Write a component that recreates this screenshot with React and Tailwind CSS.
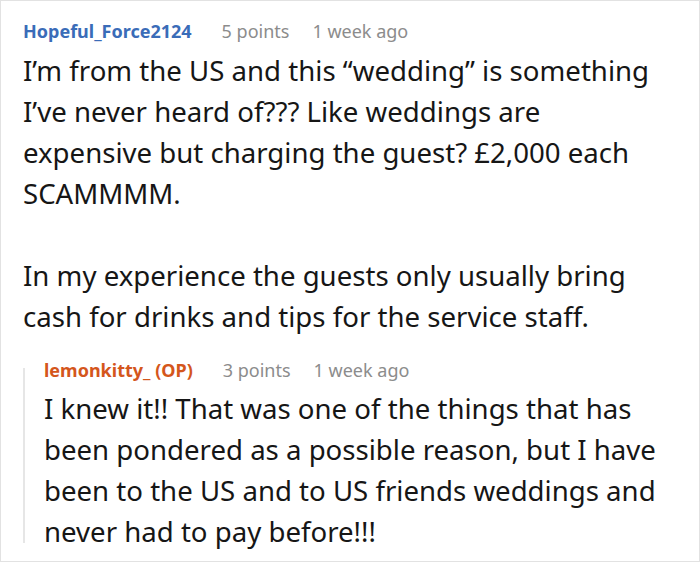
export default function App() {
  return (
    <div className="w-[700px] h-[562px] bg-white border border-[#e2e2e2] font-['Noto_Sans',sans-serif] overflow-hidden">
      <div className="pl-[22px] pr-[14px] pt-[18px]">
        <div className="flex items-baseline text-[18px] leading-[24px]">
          <span className="font-bold text-[#3a6cb8]">Hopeful_Force2124</span>
          <span className="ml-[30px] text-[#8c8c8c]">5 points</span>
          <span className="ml-[23px] text-[#8c8c8c]">1 week ago</span>
        </div>
        <div className="mt-[7px] max-w-[634px] text-[27.6px] leading-[41px] text-[#161616]">
          <p>I’m from the US and this “wedding” is something I’ve never heard of??? Like weddings are expensive but charging the guest? £2,000 each SCAMMMM.</p>
          <p className="mt-[41px]">In my experience the guests only usually bring cash for drinks and tips for the service staff.</p>
        </div>
        <div className="mt-[21px] flex">
          <div className="w-[2px] h-[175px] mt-[10px] bg-[#e6e6e6] shrink-0"></div>
          <div className="ml-[19px]">
            <div className="flex items-baseline text-[18px] leading-[24px]">
              <span className="font-bold text-[#d4561c]">lemonkitty_ (OP)</span>
              <span className="ml-[30px] text-[#8c8c8c]">3 points</span>
              <span className="ml-[23px] text-[#8c8c8c]">1 week ago</span>
            </div>
            <div className="mt-[6px] text-[27.6px] leading-[41px] text-[#161616]">
              <p>I knew it!! That was one of the things that has been pondered as a possible reason, but I have been to the US and to US friends weddings and never had to pay before!!!</p>
            </div>
          </div>
        </div>
      </div>
    </div>
  );
}
